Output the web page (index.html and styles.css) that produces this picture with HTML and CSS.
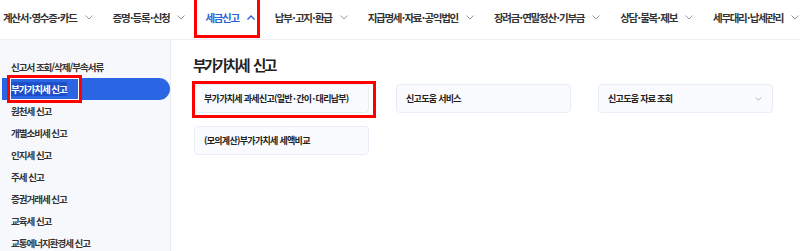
FILE: index.html
```html
<!DOCTYPE html>
<html lang="ko">
<head>
    <meta charset="UTF-8">
    <meta name="viewport" content="width=device-width, initial-scale=1.0">
    <title>세금신고</title>
    <link rel="stylesheet" href="styles.css">
</head>
<body>
    <nav class="gnb">
        <ul class="gnb-list">
            <li class="gnb-item"><span>계산서<i class="dot">·</i>영수증<i class="dot">·</i>카드</span><svg class="chev" viewBox="0 0 8 5"><polyline points="0.5,0.5 4,4 7.5,0.5"/></svg></li>
            <li class="gnb-item"><span>증명<i class="dot">·</i>등록<i class="dot">·</i>신청</span><svg class="chev" viewBox="0 0 8 5"><polyline points="0.5,0.5 4,4 7.5,0.5"/></svg></li>
            <li class="gnb-item on"><span>세금신고</span><svg class="chev" viewBox="0 0 8 5"><polyline points="0.5,4.5 4,1 7.5,4.5"/></svg></li>
            <li class="gnb-item"><span>납부<i class="dot">·</i>고지<i class="dot">·</i>환급</span><svg class="chev" viewBox="0 0 8 5"><polyline points="0.5,0.5 4,4 7.5,0.5"/></svg></li>
            <li class="gnb-item"><span>지급명세<i class="dot">·</i>자료<i class="dot">·</i>공익법인</span><svg class="chev" viewBox="0 0 8 5"><polyline points="0.5,0.5 4,4 7.5,0.5"/></svg></li>
            <li class="gnb-item"><span>장려금<i class="dot">·</i>연말정산<i class="dot">·</i>기부금</span><svg class="chev" viewBox="0 0 8 5"><polyline points="0.5,0.5 4,4 7.5,0.5"/></svg></li>
            <li class="gnb-item"><span>상담<i class="dot">·</i>불복<i class="dot">·</i>제보</span><svg class="chev" viewBox="0 0 8 5"><polyline points="0.5,0.5 4,4 7.5,0.5"/></svg></li>
            <li class="gnb-item"><span>세무대리<i class="dot">·</i>납세관리</span><svg class="chev" viewBox="0 0 8 5"><polyline points="0.5,0.5 4,4 7.5,0.5"/></svg></li>
        </ul>
    </nav>

    <div class="container">
        <!-- left menu -->
        <div class="side">
            <ul class="side-list">
                <li>신고서 조회/삭제/부속서류</li>
                <li class="on"><span class="sel">부가가치세 신고</span></li>
                <li>원천세 신고</li>
                <li>개별소비세 신고</li>
                <li>인지세 신고</li>
                <li>주세 신고</li>
                <li>증권거래세 신고</li>
                <li>교육세 신고</li>
                <li>교통에너지환경세 신고</li>
            </ul>
        </div>

        <!-- content -->
        <div class="main">
            <h2 class="tit">부가가치세 신고</h2>
            <div class="cards">
                <div class="card mark"><span>부가가치세 과세신고(일반<i class="dot">·</i>간이<i class="dot">·</i>대리납부)</span></div>
                <div class="card"><span>신고도움 서비스</span></div>
                <div class="card"><span>신고도움 자료 조회</span><svg class="chev" viewBox="0 0 8 5"><polyline points="0.5,0.5 4,4 7.5,0.5"/></svg></div>
                <div class="card"><span>(모의계산)부가가치세 세액비교</span></div>
            </div>
        </div>
    </div>
</body>
</html>
```

FILE: styles.css
```css
*{ margin: 0; padding: 0; box-sizing: border-box;}
body{ width: 800px; height: 251px; overflow: hidden; background: #fff; color: #222; font-family: "Noto Sans CJK KR", "Noto Sans", sans-serif;}
ul{ list-style: none;}
.dot{ font-style: normal;}

/* top menu */
.gnb{ height: 40px; border-bottom: 1px solid #eceef4;}
.gnb-list{ display: flex; align-items: center; gap: 20px; height: 39px; padding: 0 0 5px 3px;}
.gnb-item{ position: relative; display: flex; align-items: center; font-size: 10.5px; font-weight: 700; letter-spacing: -1.3px; color: #333; white-space: nowrap;}
.gnb-item .dot{ margin: 0 0.6px;}
.gnb-item .chev{ width: 8px; height: 5px; margin-left: 8px;}
.chev polyline{ fill: none; stroke: #999; stroke-width: 1;}
.gnb-item.on{ color: #2b63d9;}
.gnb-item.on .chev polyline{ stroke: #2b63d9; stroke-width: 1.4;}
.gnb-item.on::after{ content: ""; position: absolute; left: -11px; right: -5px; top: -14px; bottom: -13px; border: 3px solid #f00;}

.container{ display: flex; height: 211px;}

/* left menu */
.side{ width: 171px; background: #f7f8fc; border-right: 1px solid #e8ecf4; padding: 16px 0 0 2px;}
.side-list li{ height: 22px; display: flex; align-items: center; padding-left: 9px; font-size: 9.5px; font-weight: 700; letter-spacing: -1px; color: #333; white-space: nowrap;}
.side-list li.on{ background: #2a66e3; color: #fff; border-radius: 0 11px 11px 0;}
.side-list .sel{ position: relative; background: #1d50c8;}
.side-list .sel::after{ content: ""; position: absolute; left: -4px; right: -15px; top: -7px; bottom: -7px; border: 3px solid #f00; box-shadow: inset 0 0 0 1px #fff;}

/* content */
.main{ flex: 1; padding: 16px 0 0 22px;}
.tit{ font-size: 14.5px; line-height: 18px; font-weight: 700; letter-spacing: -2.3px; word-spacing: 3px; color: #222; margin-bottom: 10px;}
.cards{ display: grid; grid-template-columns: repeat(3, 175px); gap: 13px 27px; margin-left: 1px;}
.card{ position: relative; height: 29px; display: flex; align-items: center; justify-content: space-between; padding: 0 9px; background: #fafbfe; border: 1px solid #e8ecf6; border-radius: 4px; font-size: 9px; font-weight: 700; letter-spacing: -0.7px; color: #222; white-space: nowrap;}
.card .dot{ margin: 0 1px;}
.card .chev{ width: 7px; height: 4px; margin-right: 1px;}
.card.mark::after{ content: ""; position: absolute; left: -3px; right: -8px; top: -4px; bottom: -6px; border: 3px solid #f00;}
```
